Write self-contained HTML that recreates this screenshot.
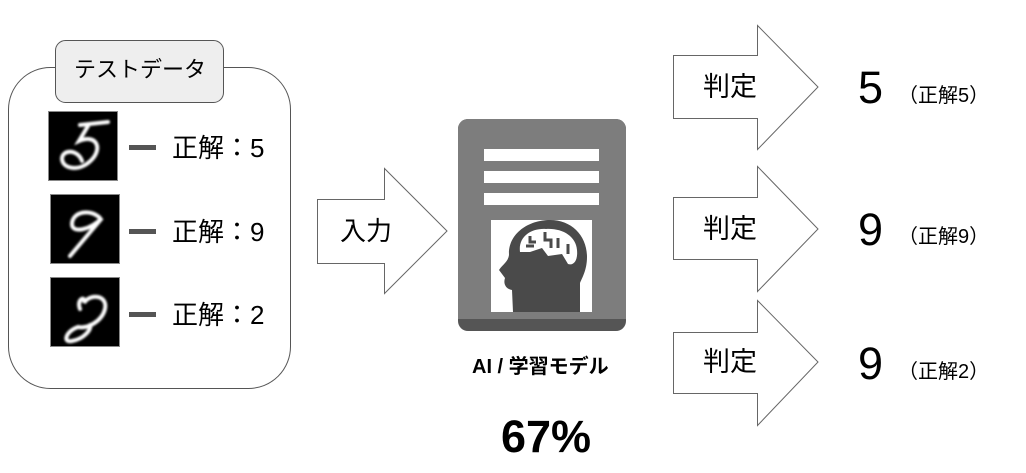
<!DOCTYPE html>
<html><head><meta charset="utf-8"><style>
body{margin:0;width:1026px;height:473px;background:#fff;position:relative;overflow:hidden;font-family:"Liberation Sans","Noto Sans CJK JP",sans-serif;color:#000}
.a{position:absolute;white-space:nowrap;line-height:1}
</style></head><body>
<svg width="1026" height="473" style="position:absolute;left:0;top:0">
<defs><filter id="bl"><feGaussianBlur stdDeviation="1.1"/></filter></defs>
<rect x="8.5" y="67.5" width="282" height="321" rx="42" fill="#fff" stroke="#555" stroke-width="1"/>
<rect x="55.5" y="40.5" width="168" height="62" rx="10" fill="#eee" stroke="#555" stroke-width="1"/>
<g transform="translate(48,111)"><rect x="0.5" y="0.5" width="69" height="69" fill="#000" stroke="#888"/>
<g fill="none" stroke="#fff" stroke-width="4" stroke-linecap="round" filter="url(#bl)">
<path d="M32 14 L60 11 M40 15 L31 30 C50 22 56 40 40 52 C30 60 15 58 14 48 C14 38 30 38 34 50"/></g></g>
<g transform="translate(50,194)"><rect x="0.5" y="0.5" width="69" height="69" fill="#000" stroke="#888"/>
<g fill="none" stroke="#fff" stroke-width="4" stroke-linecap="round" filter="url(#bl)">
<path d="M50 24 C40 14 22 18 22 30 C22 40 40 36 52 24 L20 62"/></g></g>
<g transform="translate(50,277)"><rect x="0.5" y="0.5" width="69" height="69" fill="#000" stroke="#888"/>
<g fill="none" stroke="#fff" stroke-width="4" stroke-linecap="round" filter="url(#bl)">
<path d="M30 32 C26 22 36 18 34 26 C40 16 58 18 55 32 C52 44 38 52 28 50 C16 54 12 66 22 64 C34 62 42 52 40 48"/></g></g>
<rect x="129" y="145" width="27" height="5" fill="#555"/>
<rect x="129" y="229" width="27" height="5" fill="#555"/>
<rect x="129" y="312" width="27" height="5" fill="#555"/>
<path d="M317.5 199.5 H384.5 V168.5 L447 231 L384.5 293.5 V263.5 H317.5 Z" fill="#fff" stroke="#666"/>
<rect x="458" y="119" width="168" height="212" rx="10" fill="#555"/>
<rect x="458" y="119" width="168" height="200" rx="10" fill="#7d7d7d"/>
<rect x="458" y="300" width="168" height="19" fill="#7d7d7d"/>
<rect x="484" y="149" width="115" height="12" fill="#fff"/>
<rect x="484" y="171" width="115" height="12" fill="#fff"/>
<rect x="484" y="193" width="115" height="12" fill="#fff"/>
<rect x="491" y="220" width="101" height="92" fill="#fff"/>
<path d="M513 312 L512 290 C506 289 503 284 505 278 L499 270 C503 264 508 262 509 255 C508 234 528 220 550 220 C572 220 587 236 587 257 C587 270 582 278 580 283 L580 312 Z" fill="#4a4a4a"/>
<path d="M520 252 C518 236 532 228 546 229 C562 228 576 236 577 250 C578 260 574 266 568 264 L562 254 L548 256 L542 248 L530 252 Z" fill="#fff"/>
<path d="M530 236 v6 h6 M545 232 v8 h6 v8 M558 238 v10 M568 244 v10 M526 246 h8" stroke="#4a4a4a" stroke-width="3" fill="none"/>
<path d="M673.5 55.5 H757.5 V25.5 L818 87 L757.5 149.5 V118.5 H673.5 Z" fill="#fff" stroke="#666"/>
<path d="M673.5 197.5 H757.5 V166.5 L818 229 L757.5 291.5 V259.5 H673.5 Z" fill="#fff" stroke="#666"/>
<path d="M673.5 332.5 H757.5 V300.5 L818 362 L757.5 425.5 V393.5 H673.5 Z" fill="#fff" stroke="#666"/>
</svg>
<div class="a" style="left:74px;top:59px;font-size:22px">テストデータ</div>
<div class="a" style="left:172px;top:135px;font-size:26px">正解：5</div>
<div class="a" style="left:172px;top:219px;font-size:26px">正解：9</div>
<div class="a" style="left:172px;top:302px;font-size:26px">正解：2</div>
<div class="a" style="left:340px;top:218px;font-size:26px">入力</div>
<div class="a" style="left:472px;top:357px;font-size:20px;font-weight:bold">AI / 学習モデル</div>
<div class="a" style="left:501px;top:414px;font-size:45px;font-weight:bold">67%</div>
<div class="a" style="left:703px;top:74px;font-size:27px">判定</div>
<div class="a" style="left:703px;top:216px;font-size:27px">判定</div>
<div class="a" style="left:703px;top:349px;font-size:27px">判定</div>
<div class="a" style="left:858px;top:65px;font-size:45px">5</div>
<div class="a" style="left:858px;top:207px;font-size:45px">9</div>
<div class="a" style="left:858px;top:341px;font-size:45px">9</div>
<div class="a" style="left:898px;top:86px;font-size:20px">（正解5）</div>
<div class="a" style="left:898px;top:227px;font-size:20px">（正解9）</div>
<div class="a" style="left:898px;top:362px;font-size:20px">（正解2）</div>
</body></html>
